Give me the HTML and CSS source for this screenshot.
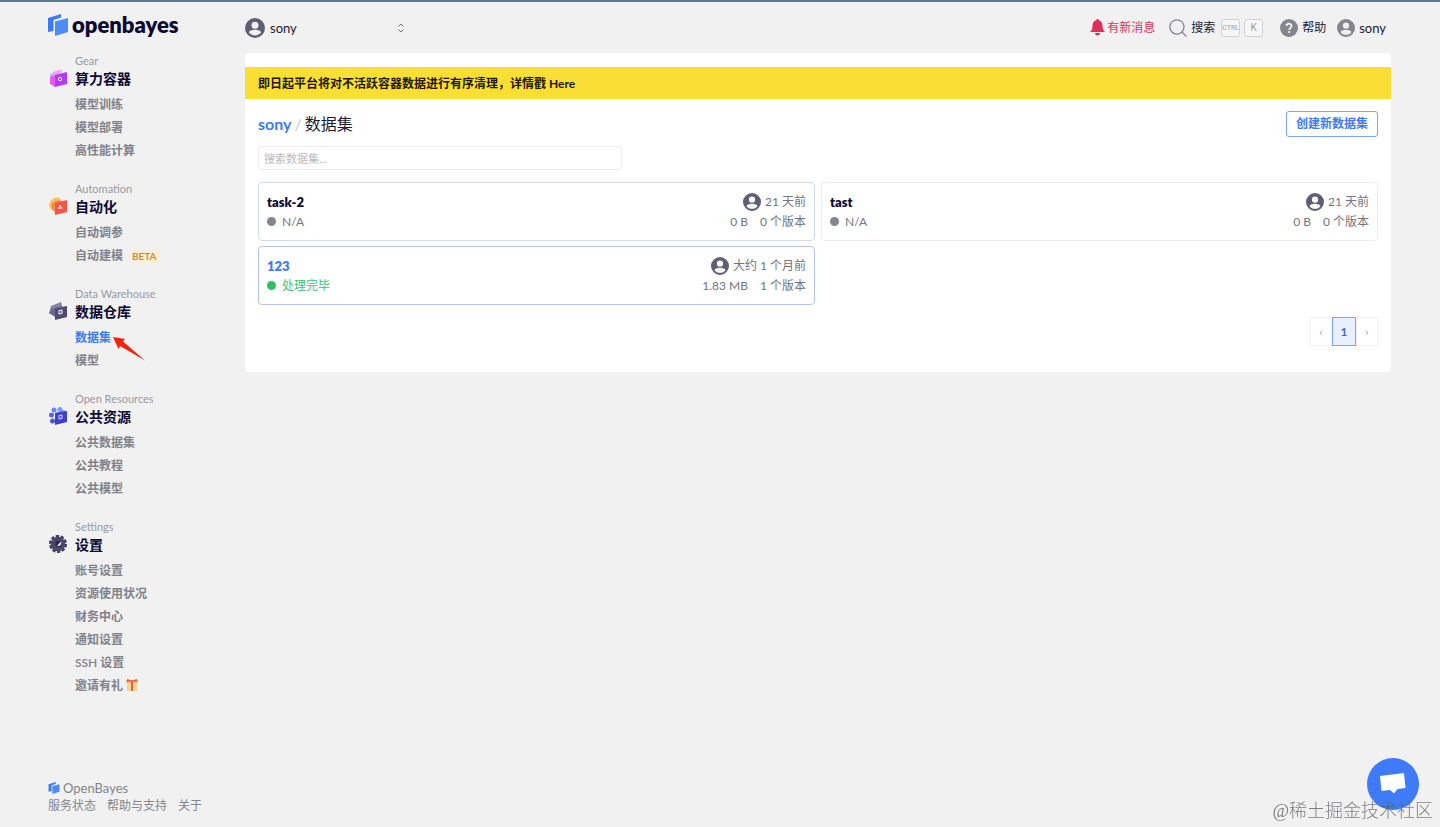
FILE: index.html
```
<!DOCTYPE html>
<html lang="zh-CN">
<head>
    <meta charset="UTF-8">
    <meta name="viewport" content="width=device-width, initial-scale=1.0">
    <title>数据集 - OpenBayes</title>
    <link rel="stylesheet" href="styles.css">
</head>
<body>
    <!-- shared shapes -->
    <svg class="defs" aria-hidden="true">
        <symbol id="avatar" viewBox="0 0 24 24">
            <path fill="currentColor" fill-rule="evenodd" d="M12 0a12 12 0 1 0 0 24a12 12 0 0 0 0-24zM12 4.500a4.200 4.200 0 1 1 0 8.400a4.200 4.200 0 0 1 0-8.400zM12 14.200c4 0 7.200 1.400 7.200 3.300c-1.500 2-4.200 3.500-7.200 3.500s-5.700-1.500-7.200-3.500c0-1.900 3.200-3.300 7.200-3.300z"/>
        </symbol>
        <symbol id="brand" viewBox="0 0 20 22">
            <path fill="#3b7cf6" d="M0 4L13 0v3.500L5.500 6v11L0 18z"/>
            <path fill="#4c8bfa" d="M7 7.500L20 4v14L7 22z"/>
        </symbol>
    </svg>

    <aside class="sidebar">
        <a class="logo" href="#"><svg class="logo-icon"><use href="#brand"/></svg>openbayes</a>

        <nav class="menu">
            <section class="group">
                <svg class="group-icon" viewBox="0 0 18 18">
                    <path fill="#c9b4f2" d="M1 5L10 1v11L1 15z"/>
                    <path fill="#e9a3f0" d="M4 3L13 0v8L4 12z" opacity=".7"/>
                    <path fill="#b43bf5" d="M6 6L18 3v12L6 18z"/>
                    <path fill="#e25cf0" d="M1 8L6 6v12L1 15z"/>
                    <circle cx="11" cy="10" r="1.700" fill="none" stroke="#fff"/>
                </svg>
                <p class="group-label">Gear</p>
                <h2>算力容器</h2>
                <ul>
                    <li><a href="#">模型训练</a></li>
                    <li><a href="#">模型部署</a></li>
                    <li><a href="#">高性能计算</a></li>
                </ul>
            </section>
            <section class="group">
                <svg class="group-icon" viewBox="0 0 18 18">
                    <path fill="#f9c05f" d="M0 8C1 2 7-1 11 1l1 4-6 9-4-1z"/>
                    <path fill="#f58a3c" d="M2 9C4 4 9 2 13 4l-1 5-6 7z"/>
                    <path fill="#f5554a" d="M6 6L18 3v12L6 18z"/>
                    <path d="M9.500 12l1.500-4 2 3.500M10 11h2.500" fill="none" stroke="#fff" stroke-width=".9"/>
                </svg>
                <p class="group-label">Automation</p>
                <h2>自动化</h2>
                <ul>
                    <li><a href="#">自动调参</a></li>
                    <li><a href="#">自动建模<span class="beta">BETA</span></a></li>
                </ul>
            </section>
            <section class="group">
                <svg class="group-icon" viewBox="0 0 18 18">
                    <path fill="#8583a8" d="M2 4l10-4 2 7L8 16 0 11z"/>
                    <path fill="#6a6790" d="M0 11l4-5 5 3-1 7z"/>
                    <path fill="#4f4c74" d="M6 6L18 4v11L6 18z"/>
                    <path d="M10 8.500l3-.5v3.500l-3 .5z" fill="none" stroke="#fff"/>
                </svg>
                <p class="group-label">Data Warehouse</p>
                <h2>数据仓库</h2>
                <ul>
                    <li class="pointed">
                        <a class="active" href="#">数据集</a>
                        <svg class="arrow" viewBox="0 0 32 25"><path fill="#f5230d" d="M0 1l12 2-2 2.500L32 24.500 7 10l-1.500 3z"/></svg>
                    </li>
                    <li><a href="#">模型</a></li>
                </ul>
            </section>
            <section class="group">
                <svg class="group-icon" viewBox="0 0 18 18">
                    <circle cx="5" cy="3" r="2.500" fill="#6f86ee"/>
                    <circle cx="11" cy="2.500" r="2.500" fill="#7d9bf2"/>
                    <circle cx="2.500" cy="8" r="2.500" fill="#5668dd"/>
                    <circle cx="3.500" cy="14" r="2.500" fill="#4a58cf"/>
                    <path fill="#5f8ff5" d="M6 6l9-3 3 2-5 3z"/>
                    <path fill="#4040c4" d="M6 6L18 4v11L6 18z"/>
                    <path d="M10 8.500l3-.5v3.500l-3 .5z" fill="none" stroke="#d5dcff"/>
                </svg>
                <p class="group-label">Open Resources</p>
                <h2>公共资源</h2>
                <ul>
                    <li><a href="#">公共数据集</a></li>
                    <li><a href="#">公共教程</a></li>
                    <li><a href="#">公共模型</a></li>
                </ul>
            </section>
            <section class="group">
                <svg class="group-icon" viewBox="0 0 18 18">
                    <circle cx="9" cy="9" r="7.500" fill="none" stroke="#3f3d5c" stroke-width="3" stroke-dasharray="3.200 1.512"/>
                    <circle cx="9" cy="9" r="7.300" fill="#4b4969"/>
                    <circle cx="9.500" cy="9" r="3.200" fill="#2b2948"/>
                    <path fill="#f1f1f1" d="M8 11l4-4.500c1 2.500-1 5-4 4.500z"/>
                </svg>
                <p class="group-label">Settings</p>
                <h2>设置</h2>
                <ul>
                    <li><a href="#">账号设置</a></li>
                    <li><a href="#">资源使用状况</a></li>
                    <li><a href="#">财务中心</a></li>
                    <li><a href="#">通知设置</a></li>
                    <li><a href="#">SSH 设置</a></li>
                    <li>
                        <a href="#">邀请有礼<svg class="gift" viewBox="0 0 12 12">
                            <path fill="#fbd38d" d="M1 3h10v9H1z"/>
                            <path fill="#f6ad72" d="M0 1h12v2.500H0z"/>
                            <path fill="#e5604d" d="M5 2h2v10H5zM1 0l5 1.500L11 0v2.500H1z"/>
                        </svg></a>
                    </li>
                </ul>
            </section>
        </nav>

        <footer class="footer">
            <a class="footer-brand" href="#"><svg><use href="#brand"/></svg>OpenBayes</a>
            <div class="footer-links">
                <a href="#">服务状态</a>
                <a href="#">帮助与支持</a>
                <a href="#">关于</a>
            </div>
        </footer>
    </aside>

    <main class="main">
        <header class="topbar">
            <div class="account">
                <svg class="account-avatar"><use href="#avatar"/></svg>
                <select aria-label="账号">
                    <option>sony</option>
                </select>
                <svg class="account-caret" viewBox="0 0 6 10"><path d="M.5 3.500L3 1l2.500 2.500M.5 6.500L3 9l2.500-2.500" fill="none" stroke="#777" stroke-width="1"/></svg>
            </div>
            <a class="news" href="#">
                <svg viewBox="0 0 15 17"><path fill="currentColor" d="M7.500 0c.8 0 1.200.5 1.200 1.200C11.500 2 12.500 4 12.500 7c0 3 .8 4.500 2.500 6H0c1.700-1.500 2.500-3 2.500-6 0-3 1-5 3.800-5.800C6.300.5 6.700 0 7.500 0zM5 14h5c0 1.500-1 2.500-2.500 2.500S5 15.500 5 14z"/></svg>有新消息
            </a>
            <button class="top-btn search" type="button">
                <svg viewBox="0 0 17 17"><circle cx="7.500" cy="7.500" r="6.700" fill="none" stroke="#85858d" stroke-width="1.200"/><path d="M12.500 12.500l4 4" stroke="#85858d" stroke-width="1.200"/></svg>
                搜索<kbd class="ctrl">CTRL</kbd><kbd>K</kbd>
            </button>
            <button class="top-btn help" type="button">
                <svg viewBox="0 0 18 18"><circle cx="9" cy="9" r="9" fill="#85858f"/><path d="M6.500 7c0-3.300 5.200-3 5 0 0 1.800-2.300 1.800-2.300 3.700" fill="none" stroke="#fff" stroke-width="1.700"/><circle cx="9.200" cy="13" r="1.100" fill="#fff"/></svg>
                帮助
            </button>
            <button class="top-btn" type="button">
                <svg class="user"><use href="#avatar"/></svg>
                sony
            </button>
        </header>

        <div class="panel">
            <div class="notice">即日起平台将对不活跃容器数据进行有序清理，详情戳 <a href="#">Here</a></div>
            <div class="content">
                <div class="title-row">
                    <h1><a href="#">sony</a><span class="slash">/</span>数据集</h1>
                    <button class="create" type="button">创建新数据集</button>
                </div>
                <input class="filter" type="text" placeholder="搜索数据集..." aria-label="搜索数据集">

                <div class="datasets">
                    <article class="dataset tinted">
                        <div class="line">
                            <a class="name" href="#">task-2</a>
                            <span class="when"><svg><use href="#avatar"/></svg>21 天前</span>
                        </div>
                        <div class="line">
                            <span class="status">N/A</span>
                            <span class="size"><span>0 B</span><span>0 个版本</span></span>
                        </div>
                    </article>
                    <article class="dataset">
                        <div class="line">
                            <a class="name" href="#">tast</a>
                            <span class="when"><svg><use href="#avatar"/></svg>21 天前</span>
                        </div>
                        <div class="line">
                            <span class="status">N/A</span>
                            <span class="size"><span>0 B</span><span>0 个版本</span></span>
                        </div>
                    </article>
                    <article class="dataset hovered">
                        <div class="line">
                            <a class="name" href="#">123</a>
                            <span class="when"><svg><use href="#avatar"/></svg>大约 1 个月前</span>
                        </div>
                        <div class="line">
                            <span class="status done">处理完毕</span>
                            <span class="size"><span>1.83 MB</span><span>1 个版本</span></span>
                        </div>
                    </article>
                </div>

                <div class="pager">
                    <button type="button" aria-label="上一页">‹</button>
                    <button type="button" class="current">1</button>
                    <button type="button" aria-label="下一页">›</button>
                </div>
            </div>
        </div>
    </main>

    <button class="chat" type="button" aria-label="在线咨询">
        <svg viewBox="0 0 26 24"><path fill="#fff" d="M0 4L24 1l1.500 15-8 1-3.500 4.500-4-3.500-8.500 1z"/></svg>
    </button>
    <div class="watermark">@稀土掘金技术社区</div>
</body>
</html>
```
FILE: styles.css
```
* {
    box-sizing: border-box;
}
body {
    display: flex;
    min-height: 100vh;
    margin: 0;
    border-top: 2px solid #5d7b8c;
    background-color: #f1f1f1;
    color: #1c1836;
    font-family: Lato, "Noto Sans CJK SC", sans-serif;
    font-size: 12px;
    line-height: 20px;
}
h1, h2, p, ul {
    margin: 0;
    padding: 0;
}
ul {
    list-style: none;
}
a {
    color: inherit;
    text-decoration: none;
}
button, input, select {
    font: inherit;
    color: inherit;
}
button {
    cursor: pointer;
}
.defs {
    position: absolute;
    width: 0;
    height: 0;
}

/* sidebar */
.sidebar {
    display: flex;
    flex-direction: column;
    flex: 0 0 245px;
    padding: 9px 0 12px 48px;
}
.logo {
    display: flex;
    align-items: center;
    gap: 4px;
    height: 28px;
    margin-bottom: 14px;
    color: #0b0733;
    font-size: 22px;
    font-weight: 800;
}
.logo-icon {
    width: 20px;
    height: 22px;
}
.group {
    position: relative;
    padding-left: 27px;
    margin-bottom: 19px;
}
.group-icon {
    position: absolute;
    left: 1px;
    top: 16px;
    width: 18px;
    height: 18px;
}
.group-label {
    color: #9a9aa0;
    font-size: 11px;
    line-height: 16px;
}
.group h2 {
    margin-bottom: 4px;
    color: #0b0733;
    font-size: 14px;
    line-height: 20px;
}
.group li {
    height: 23px;
    line-height: 23px;
    color: #81818b;
    font-weight: 600;
}
.group .active {
    color: #3f7af5;
}
.pointed {
    position: relative;
}
.arrow {
    position: absolute;
    left: 38px;
    top: 10px;
    width: 32px;
    height: 25px;
}
.beta {
    margin-left: 6px;
    padding: 1px 3px;
    border-radius: 3px;
    background-color: #fbefd5;
    color: #c58a2b;
    font-size: 10px;
    font-weight: 600;
}
.gift {
    width: 12px;
    height: 12px;
    margin-left: 3px;
    vertical-align: -1px;
}
.footer {
    margin-top: auto;
    color: #85858d;
    line-height: 18px;
}
.footer-brand {
    display: flex;
    align-items: center;
    gap: 3px;
    font-size: 13px;
}
.footer-brand svg {
    width: 12px;
    height: 12px;
}
.footer-links {
    display: flex;
    gap: 11px;
}

/* top bar */
.main {
    flex: 1;
    min-width: 0;
    margin-right: 49px;
}
.topbar {
    display: flex;
    align-items: center;
    height: 51px;
    padding-right: 5px;
}
.account {
    position: relative;
    display: flex;
    align-items: center;
    width: 163px;
    margin-right: auto;
}
.account-avatar {
    position: absolute;
    width: 20px;
    height: 20px;
    color: #605e75;
    pointer-events: none;
}
.account select {
    width: 100%;
    height: 24px;
    padding: 0 0 0 25px;
    border: 0;
    background: none;
    appearance: none;
    font-size: 13px;
}
.account-caret {
    position: absolute;
    right: 4px;
    width: 6px;
    height: 10px;
    pointer-events: none;
}
.news {
    display: flex;
    align-items: center;
    gap: 2px;
    margin-right: 14px;
    color: #e0305a;
}
.news svg {
    width: 15px;
    height: 17px;
}
.top-btn {
    display: flex;
    align-items: center;
    gap: 4px;
    padding: 0;
    border: 0;
    background: none;
    font-size: 13px;
}
.top-btn svg {
    width: 18px;
    height: 18px;
}
.top-btn .user {
    color: #85858f;
}
.search {
    margin-right: 17px;
    font-size: 12px;
}
.help {
    margin-right: 11px;
    font-size: 12px;
}
kbd {
    width: 19px;
    height: 18px;
    border: 1px solid #d2d2d5;
    border-radius: 3px;
    background-color: #f7f7f7;
    color: #9b9ba1;
    font-family: Roboto, sans-serif;
    font-size: 10px;
    line-height: 16px;
    text-align: center;
}
.ctrl {
    margin-left: 2px;
    font-size: 7px;
}

/* panel */
.panel {
    padding: 14px 0 26px;
    border-radius: 4px;
    background-color: #fff;
}
.notice {
    padding: 7px 13px 5px;
    background-color: #f9df33;
    color: #1c1604;
    font-weight: 700;
}
.content {
    padding: 12px 13px 0;
}
.title-row {
    display: flex;
    align-items: center;
    justify-content: space-between;
    margin-bottom: 9px;
}
h1 {
    color: #1c1836;
    font-size: 16px;
    font-weight: 400;
}
h1 a {
    color: #3f7af5;
    font-weight: 700;
}
.slash {
    margin: 0 3px;
    color: #c9c9d0;
}
.create {
    height: 26px;
    padding: 0 9px;
    border: 1px solid #7ea4f5;
    border-radius: 3px;
    background-color: #fff;
    color: #3f7af5;
    font-weight: 700;
    line-height: 24px;
}
.filter {
    display: block;
    width: 364px;
    height: 24px;
    padding: 0 5px;
    border: 1px solid #ececee;
    border-radius: 3px;
    background-color: #fff;
    font-size: 11px;
}
.filter::placeholder {
    color: #b9b9be;
}
.datasets {
    display: grid;
    grid-template-columns: 1fr 1fr;
    gap: 5px 6px;
    margin: 12px 0;
}
.dataset {
    padding: 9px 8px;
    border: 1px solid #ededf0;
    border-radius: 4px;
    color: #74747e;
}
.dataset.tinted {
    border-color: #d2dbec;
}
.dataset.hovered {
    border-color: #b5c4ef;
}
.line {
    display: flex;
    align-items: center;
    justify-content: space-between;
    height: 20px;
}
.line + .line {
    height: 19px;
}
.name {
    color: #0b0733;
    font-size: 13px;
    font-weight: 800;
}
.hovered .name {
    color: #3f7af5;
}
.when {
    display: flex;
    align-items: center;
    gap: 4px;
}
.when svg {
    width: 18px;
    height: 18px;
    color: #605e75;
}
.size {
    display: flex;
    gap: 12px;
}
.status {
    display: flex;
    align-items: center;
    gap: 6px;
}
.status::before {
    content: "";
    width: 9px;
    height: 9px;
    border-radius: 50%;
    background-color: #85858d;
}
.done {
    color: #3cc272;
}
.done::before {
    background-color: #2fc065;
}
.pager {
    display: flex;
    justify-content: flex-end;
}
.pager button {
    width: 22px;
    height: 29px;
    padding: 0;
    border: 1px solid #f0f0f2;
    background-color: #fff;
    color: #a9a9b0;
}
.pager .current {
    width: 24px;
    border-color: #7ea4f5;
    background-color: #e6f0ff;
    color: #4a68b8;
    font-weight: 700;
}

/* floating things */
.chat {
    position: fixed;
    right: 21px;
    bottom: 17px;
    display: flex;
    align-items: center;
    justify-content: center;
    width: 52px;
    height: 52px;
    border: 0;
    border-radius: 50%;
    background-color: #3f7af9;
}
.chat svg {
    width: 26px;
    height: 24px;
}
.watermark {
    position: fixed;
    right: 7px;
    bottom: 4px;
    color: rgba(90, 90, 95, 0.75);
    font-family: "Liberation Serif", "Noto Sans CJK SC", serif;
    font-size: 18px;
    font-weight: 300;
    line-height: 24px;
    pointer-events: none;
}
```
